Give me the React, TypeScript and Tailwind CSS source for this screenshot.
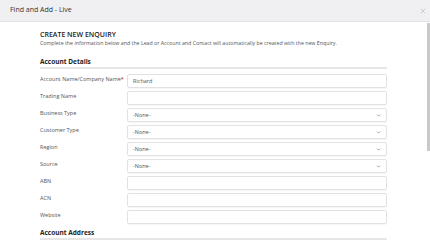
import { ChevronDown, X } from 'lucide-react';

const rows: { label: string; required?: boolean; value?: string; select?: boolean }[] = [
  { label: 'Account Name/Company Name', required: true, value: 'Richard' },
  { label: 'Trading Name' },
  { label: 'Business Type', select: true },
  { label: 'Customer Type', select: true },
  { label: 'Region', select: true },
  { label: 'Source', select: true },
  { label: 'ABN' },
  { label: 'ACN' },
  { label: 'Website' },
];

export default function App() {
  return (
    <div className="flex h-[242px] w-[430px] flex-col overflow-hidden bg-white font-['Open_Sans',sans-serif] text-[#333]">
      <div className="flex h-[22px] shrink-0 items-center justify-between border-b border-[#e3e3e6] bg-[#f0f0f2] pl-[10px] pr-[3px]">
        <span className="text-[7px] text-[#333]">Find and Add - Live</span>
        <X className="h-[8px] w-[8px] text-[#aaa]" strokeWidth={1.5} />
      </div>

      <div className="flex min-h-0 flex-1">
        <div className="flex-1 pl-[40px] pr-[40px] pt-[8px]">
          <h1 className="text-[7px] font-semibold leading-[9px] text-[#222]">CREATE NEW ENQUIRY</h1>
          <p className="mt-[1px] whitespace-nowrap text-[5.25px] leading-[7px] text-[#555]">
            Complete the information below and the Lead or Account and Contact will automatically be created with the new Enquiry.
          </p>

          <h2 className="mt-[10px] text-[6.5px] font-bold leading-[9px] text-[#222]">Account Details</h2>
          <div className="mt-[1px] h-[2px] bg-[#e6e6e6]" />

          <div className="mt-[5px] flex flex-col gap-[3px]">
            {rows.map((row) => (
              <div key={row.label} className="flex h-[14px] items-start">
                <label className="w-[87px] shrink-0 pt-[2px] text-[5.5px] leading-[7px] text-[#555]">
                  {row.label}
                  {row.required ? <span className="text-[#d40000]">*</span> : null}
                </label>
                <div className="flex h-[14px] flex-1 items-center justify-between rounded-[2px] border border-[#e2e2e2] px-[5px] shadow-[0_1px_1px_rgba(0,0,0,0.04)]">
                  <span className="text-[5.5px] leading-[7px] text-[#555]">{row.select ? '-None-' : row.value ?? ''}</span>
                  {row.select ? <ChevronDown className="h-[5px] w-[5px] text-[#666]" strokeWidth={3} /> : null}
                </div>
              </div>
            ))}
          </div>

          <h2 className="mt-[4px] text-[6.5px] font-bold leading-[9px] text-[#222]">Account Address</h2>
          <div className="mt-[1px] h-[2px] bg-[#e6e6e6]" />
        </div>

        <div className="w-[3px] shrink-0 pt-[1px]">
          <div className="h-[128px] w-[3px] bg-[#c9c9c9]" />
        </div>
      </div>
    </div>
  );
}
